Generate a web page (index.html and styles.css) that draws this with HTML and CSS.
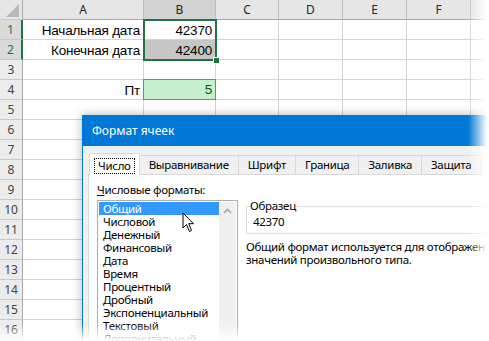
FILE: index.html
```html
<!DOCTYPE html>
<html lang="ru">
<head>
<meta charset="UTF-8">
<meta name="viewport" content="width=device-width, initial-scale=1.0">
<title>Формат ячеек</title>
<link rel="stylesheet" href="styles.css">
</head>
<body>

<div class="screen">
    <div class="sheet">
        <div class="row head">
            <div class="rh corner"></div><div class="ch">A</div><div class="ch sel">B</div><div class="ch">C</div><div class="ch">D</div><div class="ch">E</div><div class="ch">F</div><div class="ch"></div>
        </div>
        <div class="row">
            <div class="rh sel">1</div><div class="c num">Начальная дата</div><div class="c num">42370</div><div class="c"></div><div class="c"></div><div class="c"></div><div class="c"></div><div class="c"></div>
        </div>
        <div class="row">
            <div class="rh sel">2</div><div class="c num">Конечная дата</div><div class="c num grey">42400</div><div class="c"></div><div class="c"></div><div class="c"></div><div class="c"></div><div class="c"></div>
        </div>
        <div class="row">
            <div class="rh">3</div><div class="c"></div><div class="c"></div><div class="c"></div><div class="c"></div><div class="c"></div><div class="c"></div><div class="c"></div>
        </div>
        <div class="row">
            <div class="rh">4</div><div class="c num">Пт</div><div class="c num good">5</div><div class="c"></div><div class="c"></div><div class="c"></div><div class="c"></div><div class="c"></div>
        </div>
        <div class="row"><div class="rh">5</div><div class="c"></div><div class="c"></div><div class="c"></div><div class="c"></div><div class="c"></div><div class="c"></div><div class="c"></div></div>
        <div class="row"><div class="rh">6</div><div class="c"></div><div class="c"></div><div class="c"></div><div class="c"></div><div class="c"></div><div class="c"></div><div class="c"></div></div>
        <div class="row"><div class="rh">7</div><div class="c"></div><div class="c"></div><div class="c"></div><div class="c"></div><div class="c"></div><div class="c"></div><div class="c"></div></div>
        <div class="row"><div class="rh">8</div><div class="c"></div><div class="c"></div><div class="c"></div><div class="c"></div><div class="c"></div><div class="c"></div><div class="c"></div></div>
        <div class="row"><div class="rh">9</div><div class="c"></div><div class="c"></div><div class="c"></div><div class="c"></div><div class="c"></div><div class="c"></div><div class="c"></div></div>
        <div class="row"><div class="rh">10</div><div class="c"></div><div class="c"></div><div class="c"></div><div class="c"></div><div class="c"></div><div class="c"></div><div class="c"></div></div>
        <div class="row"><div class="rh">11</div><div class="c"></div><div class="c"></div><div class="c"></div><div class="c"></div><div class="c"></div><div class="c"></div><div class="c"></div></div>
        <div class="row"><div class="rh">12</div><div class="c"></div><div class="c"></div><div class="c"></div><div class="c"></div><div class="c"></div><div class="c"></div><div class="c"></div></div>
        <div class="row"><div class="rh">13</div><div class="c"></div><div class="c"></div><div class="c"></div><div class="c"></div><div class="c"></div><div class="c"></div><div class="c"></div></div>
        <div class="row"><div class="rh">14</div><div class="c"></div><div class="c"></div><div class="c"></div><div class="c"></div><div class="c"></div><div class="c"></div><div class="c"></div></div>
        <div class="row"><div class="rh">15</div><div class="c"></div><div class="c"></div><div class="c"></div><div class="c"></div><div class="c"></div><div class="c"></div><div class="c"></div></div>
        <div class="row"><div class="rh">16</div><div class="c"></div><div class="c"></div><div class="c"></div><div class="c"></div><div class="c"></div><div class="c"></div><div class="c"></div></div>

        <div class="selection"><span class="handle"></span></div>
    </div>

    <div class="dialog">
        <div class="title">Формат ячеек</div>
        <div class="dialog-body">
            <div class="tabs">
                <div class="tab active"><span class="focus">Число</span></div>
                <div class="tab">Выравнивание</div>
                <div class="tab">Шрифт</div>
                <div class="tab">Граница</div>
                <div class="tab">Заливка</div>
                <div class="tab">Защита</div>
            </div>
            <div class="page">
                <div class="left">
                    <div class="label"><u>Ч</u>исловые форматы:</div>
                    <div class="listbox">
                        <ul class="items">
                            <li class="selected">Общий</li>
                            <li>Числовой</li>
                            <li>Денежный</li>
                            <li>Финансовый</li>
                            <li>Дата</li>
                            <li>Время</li>
                            <li>Процентный</li>
                            <li>Дробный</li>
                            <li>Экспоненциальный</li>
                            <li>Текстовый</li>
                            <li>Дополнительный</li>
                        </ul>
                        <div class="scrollbar">
                            <svg width="9" height="6" viewBox="0 0 9 6"><path d="M1 5 L4.5 1.5 L8 5" fill="none" stroke="#a6a6a6" stroke-width="1.6"/></svg>
                        </div>
                    </div>
                </div>
                <div class="right">
                    <fieldset class="sample">
                        <legend>Образец</legend>
                        <div class="sample-value">42370</div>
                    </fieldset>
                    <p class="desc">Общий формат используется для отображения<br>значений произвольного типа.</p>
                </div>
            </div>
        </div>
    </div>

    <svg class="cursor" width="14" height="21" viewBox="0 0 14 21">
        <path d="M1 1 L1 16 L4.5 12.5 L7.5 19.5 L9.5 18.5 L6.7 11.7 L11.5 11.7 Z" fill="#fff" stroke="#000" stroke-width="1" stroke-linejoin="miter"/>
    </svg>

    <div class="fade"></div>
</div>

</body>
</html>
```

FILE: styles.css
```css
body {
    margin: 0;
    padding: 0;
    background: #fff;
}
.screen {
    position: relative;
    width: 489px;
    height: 341px;
    overflow: hidden;
    font-family: "Liberation Sans", Arial, sans-serif;
}

/* spreadsheet */
.sheet {
    position: relative;
}
.row {
    display: grid;
    grid-template-columns: 23px 121px 72px 63px 64px 64px 64px 18px;
    height: 20px;
}
.c, .ch, .rh {
    box-sizing: border-box;
    border-right: 1px solid #d4d4d4;
    border-bottom: 1px solid #d4d4d4;
    font-size: 13.5px;
    color: #000;
    line-height: 19px;
    white-space: nowrap;
    overflow: hidden;
}
.c.num {
    text-align: right;
    padding-right: 3px;
    padding-top: 1px;
    letter-spacing: -0.2px;
}
.c.grey {
    background: #c6c6c6;
}
.c.good {
    background: #c6efce;
    color: #006100;
    border: 1px solid #36b24a;
    margin: -1px 0 0 -1px;
    line-height: 19px;
    padding-top: 0;
}
.ch {
    background: #e6e6e6;
    border-right-color: #bdbdbd;
    border-bottom-color: #a9a9a9;
    text-align: center;
    color: #262626;
    font-family: "Noto Sans", sans-serif;
    font-size: 12px;
}
.ch.sel {
    background: #d2d2d2;
}
.rh {
    background: #ececec;
    border-right-color: #a9a9a9;
    border-bottom-color: #c8c8c8;
    text-align: center;
    color: #444;
    font-family: "Noto Sans", sans-serif;
    font-size: 12px;
}
.rh.sel {
    background: #dadada;
    border-right: 2px solid #217346;
    color: #217346;
}
.rh.corner {
    position: relative;
    background: #e6e6e6;
}
.rh.corner::after {
    content: "";
    position: absolute;
    right: 3px;
    bottom: 2px;
    width: 13px;
    height: 13px;
    background: #b9b9b9;
    clip-path: polygon(100% 0, 100% 100%, 0 100%);
}
.selection {
    position: absolute;
    left: 143px;
    top: 19px;
    width: 74px;
    height: 42px;
    box-sizing: border-box;
    border: 2px solid #217346;
}
.handle {
    position: absolute;
    right: -5px;
    bottom: -5px;
    width: 5px;
    height: 5px;
    background: #217346;
    border: 1px solid #fff;
}

/* dialog */
.dialog {
    position: absolute;
    left: 82px;
    top: 115px;
    width: 440px;
    height: 260px;
    box-sizing: border-box;
    border: 1px solid #0078d7;
    background: #f0f0f0;
    box-shadow: 0 0 9px rgba(0, 0, 0, 0.3);
    font-family: "Noto Sans", sans-serif;
    font-size: 11.5px;
    letter-spacing: -0.3px;
    color: #000;
}
.title {
    height: 30px;
    line-height: 30px;
    background: #0078d7;
    color: #fff;
    padding-left: 9px;
    font-size: 12px;
    letter-spacing: 0;
}
.dialog-body {
    padding: 7px 0 0 5px;
}
.tabs {
    display: flex;
    align-items: flex-end;
    height: 21px;
    padding-left: 1px;
}
.tab {
    height: 19px;
    line-height: 18px;
    padding: 0 9px;
    box-sizing: border-box;
    background: #f0f0f0;
    border: 1px solid #d9d9d9;
    border-bottom: none;
    margin-left: -1px;
}
.tab.active {
    height: 22px;
    background: #fff;
    padding: 3px 4px 0 4px;
    position: relative;
    z-index: 1;
    margin-bottom: -1px;
    margin-left: 0;
}
.focus {
    display: inline-block;
    padding: 0 3px;
    line-height: 14px;
    border: 1px dotted #000;
}
.page {
    display: flex;
    gap: 8px;
    background: #fff;
    border: 1px solid #d9d9d9;
    height: 200px;
    padding: 8px 0 0 8px;
}
.left {
    width: 141px;
}
.label {
    line-height: 14px;
}
.label u {
    text-decoration-thickness: 1px;
}
.listbox {
    display: flex;
    margin-top: 3px;
    height: 160px;
    border: 1px solid #adadad;
    padding: 1px;
}
.items {
    flex: 1;
    list-style: none;
    margin: 0;
    padding: 0;
}
.items li {
    height: 13px;
    line-height: 13px;
    padding-left: 4px;
    white-space: nowrap;
}
.items li.selected {
    background: #3399ff;
    color: #fff;
}
.scrollbar {
    width: 17px;
    background: #f0f0f0;
    display: flex;
    justify-content: center;
    padding-top: 6px;
}
.right {
    flex: 1;
    padding-top: 16px;
}
.sample {
    margin: 0;
    padding: 2px 0 4px 8px;
    border: 1px solid #dcdcdc;
}
.sample legend {
    padding: 0;
    margin-left: -5px;
    line-height: 14px;
}
.sample-value {
    line-height: 14px;
    margin-left: -2px;
}
.desc {
    margin: 6px 0 0 0;
    line-height: 13px;
    white-space: nowrap;
}

.cursor {
    position: absolute;
    left: 182px;
    top: 212px;
}

/* faded torn edge of the screenshot */
.fade {
    position: absolute;
    inset: 0;
    background:
        linear-gradient(to right, rgba(255,255,255,0) 468px, #fff 487px),
        linear-gradient(to bottom, rgba(255,255,255,0) 324px, #fff 341px);
    pointer-events: none;
}
```
